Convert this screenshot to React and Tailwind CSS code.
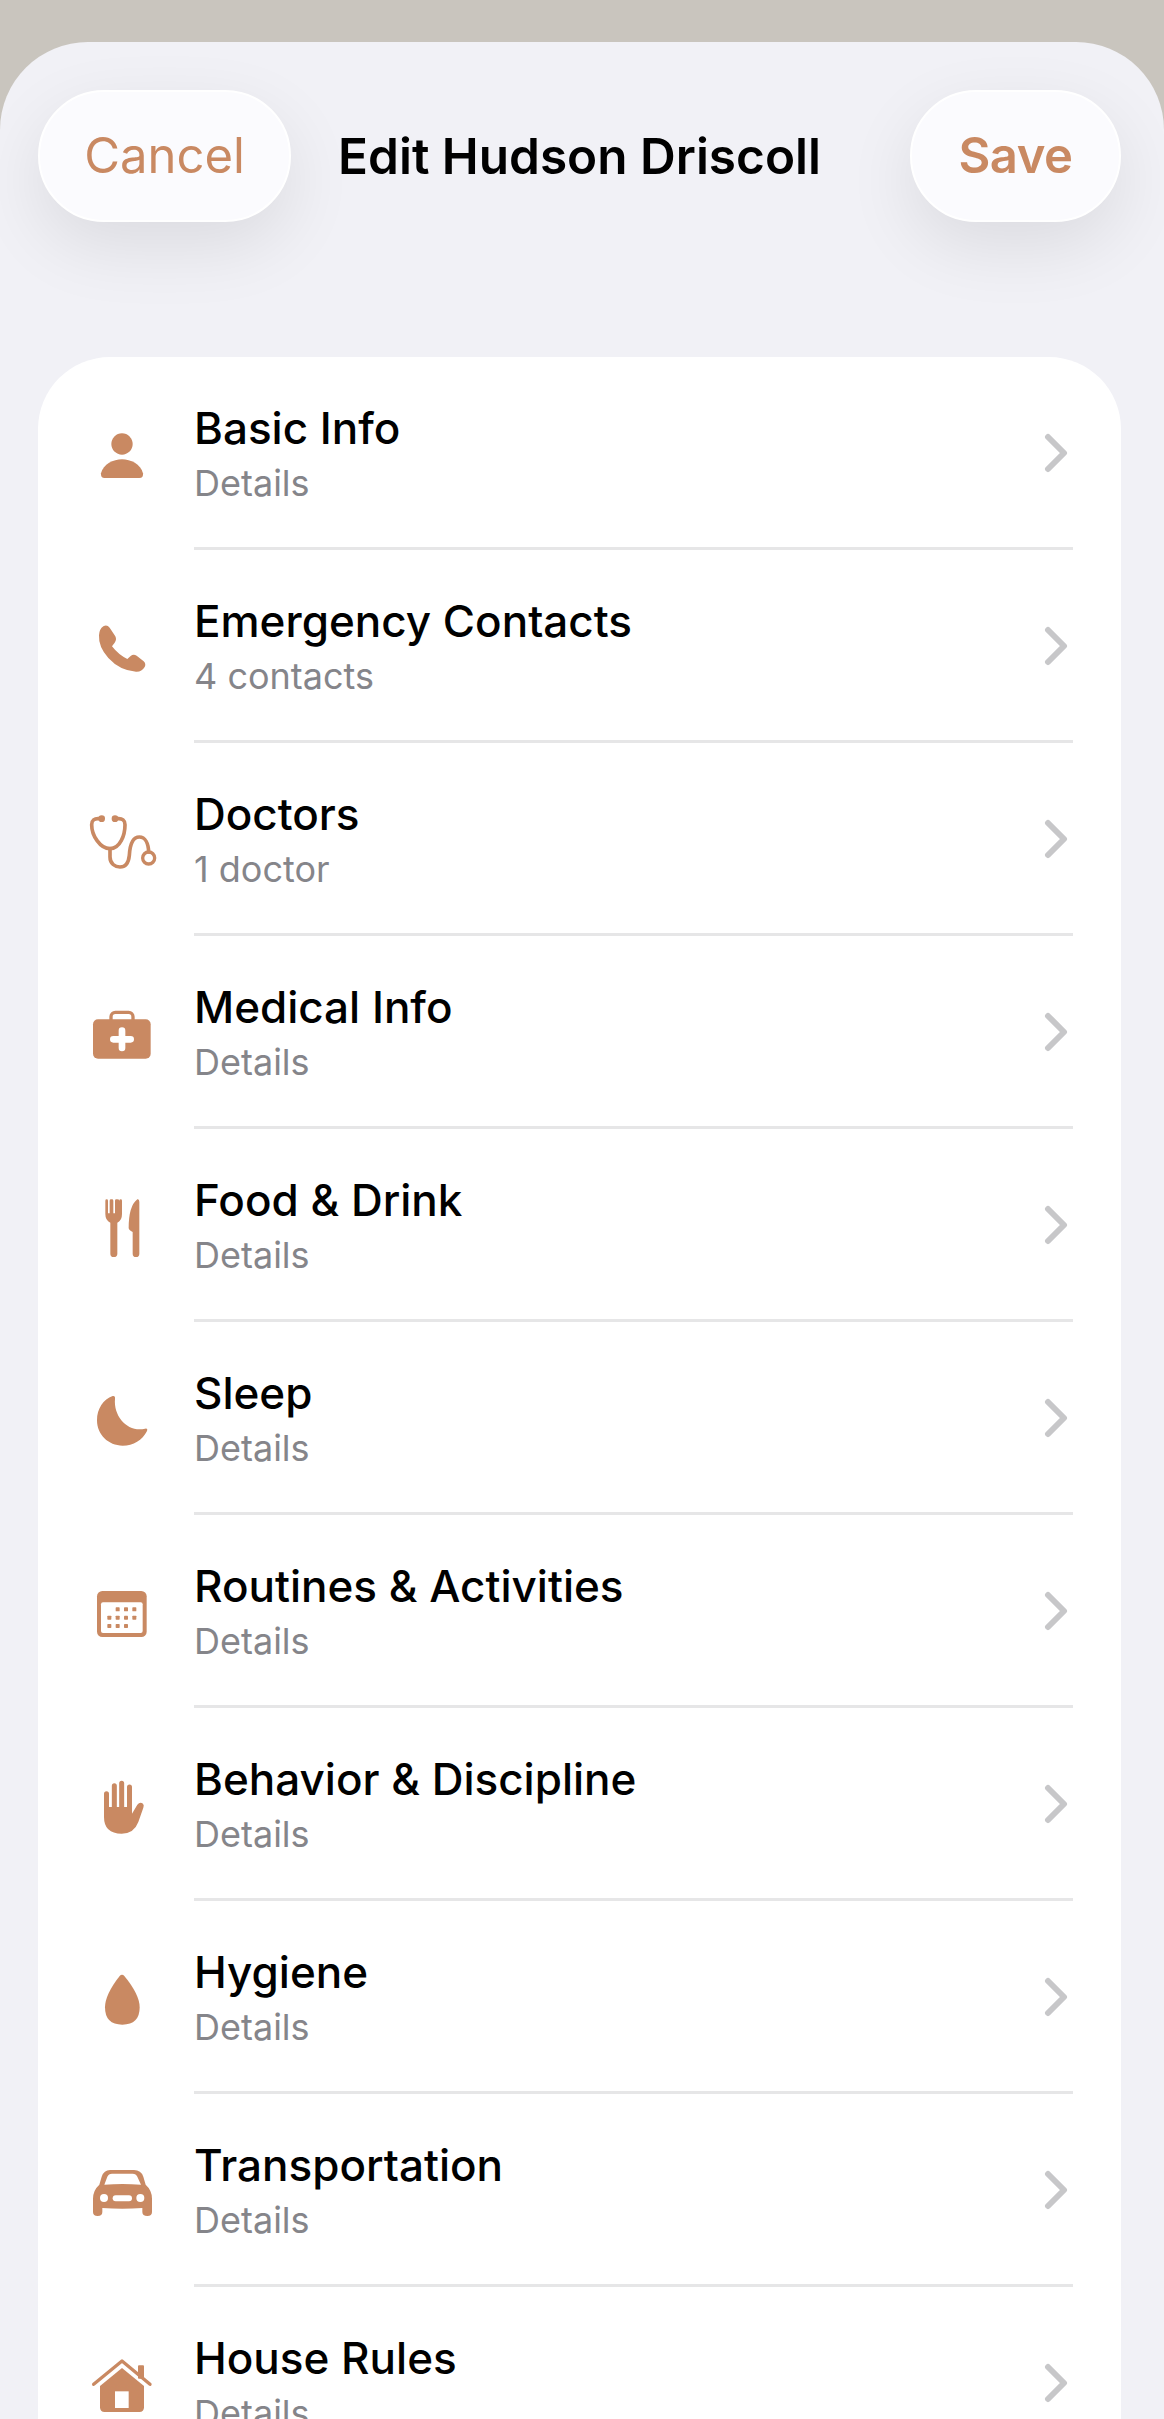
import React from 'react';

const ACCENT = '#c98962';

const icons = {
  person: (
    <svg viewBox="66 36 240 240" className="w-20 h-20" fill={ACCENT}>
      <circle cx="186" cy="126" r="32" />
      <path d="M123 214C130 186 160 172 186 172C212 172 242 186 249 214Q251 228 238 228H134Q121 228 123 214Z" />
    </svg>
  ),
  phone: (
    <svg viewBox="66 615 240 240" className="w-20 h-20" fill={ACCENT}>
      <path d="M130 673Q141 667 149 677L166 703Q171 713 164 722L156 733Q175 758 202 771L212 762Q220 755 230 761L251 778Q259 786 254 795Q245 810 228 809Q180 806 145 768Q115 735 117 700Q118 681 130 673Z" />
    </svg>
  ),
  stethoscope: (
    <svg viewBox="66 1194 240 240" className="w-20 h-20" fill="none" stroke={ACCENT} strokeWidth="11" strokeLinecap="round">
      <path d="M118 1250Q95 1248 95 1268C95 1300 120 1340 150 1340C180 1340 195 1300 195 1268Q195 1248 172 1250" />
      <path d="M150 1340V1365C150 1385 165 1395 180 1395C198 1395 206 1380 208 1360C210 1325 220 1305 238 1305C256 1305 265 1325 266 1350" />
      <circle cx="266" cy="1368" r="18" strokeWidth="10" />
      <circle cx="125" cy="1250" r="10" fill={ACCENT} stroke="none" />
      <circle cx="165" cy="1250" r="10" fill={ACCENT} stroke="none" />
    </svg>
  ),
  medical: (
    <svg viewBox="66 33 240 240" className="w-20 h-20">
      <rect x="153" y="91" width="66" height="40" rx="13" fill="none" stroke={ACCENT} strokeWidth="10" />
      <rect x="99" y="112" width="173" height="118" rx="15" fill={ACCENT} />
      <path d="M186 146V198M160 172H212" stroke="#fff" strokeWidth="20" strokeLinecap="round" fill="none" />
    </svg>
  ),
  food: (
    <svg viewBox="66 612 240 240" className="w-20 h-20" fill={ACCENT}>
      <path d="M136 656Q136 652 140 652Q144 652 144 656V694H149V656Q149 652 153 652H156Q160 652 160 656V694H165V656Q165 652 169 652H171Q178 652 178 656V694H178V656Q178 652 182 652Q186 652 186 656V696Q186 716 172 722V815Q172 825 161 825Q151 825 151 815V722Q136 716 136 696Z" />
      <path d="M238 660Q238 650 232 652Q206 672 206 738Q206 744 218 750V815Q218 825 228 825Q238 825 238 815Z" />
    </svg>
  ),
  moon: (
    <svg viewBox="66 1191 240 240" className="w-20 h-20" fill={ACCENT}>
      <path d="M158 1242Q166 1240 165 1250C160 1305 205 1352 255 1340Q264 1338 261 1347C247 1375 220 1391 188 1391C145 1391 111 1358 111 1315C111 1280 130 1252 158 1242Z" />
    </svg>
  ),
  calendar: (
    <svg viewBox="66 90 240 240" className="w-20 h-20" fill={ACCENT}>
      <rect x="111" y="147" width="149" height="138" rx="16" />
      <rect x="123" y="181" width="125" height="92" rx="6" fill="#fff" />
      {[[173, 202], [198, 202], [223, 202], [148, 227], [173, 227], [198, 227], [223, 227], [148, 252], [173, 252], [198, 252]].map(([x, y]) => (
        <rect key={`${x}-${y}`} x={x - 6} y={y - 6} width="12" height="12" rx="2" />
      ))}
    </svg>
  ),
  hand: (
    <svg viewBox="66 669 240 240" className="w-20 h-20" fill={ACCENT}>
      <path d="M139.500 755V815M163 731V810M185 724V810M208.500 735V815" stroke={ACCENT} strokeWidth="15" strokeLinecap="round" />
      <path d="M132 795H216V815L232 788Q240 778 249 785Q253 790 250 797L235 840Q222 875 185 875Q132 875 132 825Z" />
    </svg>
  ),
  drop: (
    <svg viewBox="66 1248 240 240" className="w-20 h-20" fill={ACCENT}>
      <path d="M179 1302Q186 1294 193 1302Q239 1358 239 1396Q239 1448 187 1448Q135 1448 135 1396Q135 1358 179 1302Z" />
    </svg>
  ),
  car: (
    <svg viewBox="66 327 240 240" className="w-20 h-20" fill={ACCENT}>
      <path d="M150 384H222Q243 384 250 404L257 428Q276 445 276 470V510Q276 522 262 522Q247 522 247 510V498Q187 502 127 498V510Q127 522 113 522Q99 522 99 510V470Q99 445 118 428L125 404Q132 384 150 384Z" />
      <path d="M133 428L142 404Q146 395 156 395H218Q228 395 232 404L243 428Q187 424 133 428Z" fill="#fff" />
      <circle cx="132" cy="468" r="12" fill="#fff" />
      <circle cx="241" cy="468" r="12" fill="#fff" />
      <rect x="158" y="460" width="58" height="18" rx="9" fill="#fff" />
    </svg>
  ),
  house: (
    <svg viewBox="66 906 240 240" className="w-20 h-20" fill={ACCENT}>
      <path d="M101 1027L186 957L270 1027" fill="none" stroke={ACCENT} strokeWidth="10" strokeLinecap="round" strokeLinejoin="round" />
      <rect x="234" y="970" width="18" height="40" rx="3" />
      <path d="M186 978L252 1032V1096Q252 1110 238 1110H134Q120 1110 120 1096V1032Z" />
      <rect x="165" y="1048" width="41" height="50" fill="#fff" />
    </svg>
  ),
};

const rows = [
  { icon: 'person', title: 'Basic Info', sub: 'Details' },
  { icon: 'phone', title: 'Emergency Contacts', sub: '4 contacts' },
  { icon: 'stethoscope', title: 'Doctors', sub: '1 doctor' },
  { icon: 'medical', title: 'Medical Info', sub: 'Details' },
  { icon: 'food', title: 'Food & Drink', sub: 'Details' },
  { icon: 'moon', title: 'Sleep', sub: 'Details' },
  { icon: 'calendar', title: 'Routines & Activities', sub: 'Details' },
  { icon: 'hand', title: 'Behavior & Discipline', sub: 'Details' },
  { icon: 'drop', title: 'Hygiene', sub: 'Details' },
  { icon: 'car', title: 'Transportation', sub: 'Details' },
  { icon: 'house', title: 'House Rules', sub: 'Details' },
];

const Row = ({ icon, title, sub }) => (
  <div className="flex items-stretch h-[193px]">
    <div className="w-[156px] shrink-0 flex items-center pl-[44px]">{icons[icon]}</div>
    <div className="flex-1 mr-[48px] flex items-center border-b-[3px] border-[#e6e6e7]">
      <div className="flex-1 pt-[3px]">
        <div className="text-[44px] leading-[52px] font-[450] text-black">{title}</div>
        <div className="mt-[6px] text-[36px] leading-[46px] text-[#85858a]">{sub}</div>
      </div>
      <svg viewBox="0 0 24 40" className="w-[24px] h-[40px] mr-[5px] mt-[2px]" fill="none" stroke="#c7c7c9" strokeWidth="6" strokeLinecap="round" strokeLinejoin="round">
        <path d="M4 4L20 20L4 36" />
      </svg>
    </div>
  </div>
);

const PillButton = ({ children, className }) => (
  <button className={`h-[132px] rounded-[66px] bg-[#fbfbfe] border-2 border-white text-[49px] text-[#c98962] shadow-[0_24px_70px_rgba(0,0,0,0.09)] ${className}`}>
    {children}
  </button>
);

export default function App() {
  return (
    <div className="h-[2419px] overflow-hidden bg-[#c9c5be] pt-[42px] font-['Inter','Noto_Sans',sans-serif]">
      <div className="h-full bg-[#f1f1f6] rounded-t-[88px] pl-[38px] pr-[43px] pt-[48px]">
        <div className="grid grid-cols-[1fr_auto_1fr] items-center">
          <PillButton className="justify-self-start w-[253px]">Cancel</PillButton>
          <h1 className="text-[49.500px] font-semibold text-black">Edit Hudson Driscoll</h1>
          <PillButton className="justify-self-end w-[211px] font-semibold tracking-[-0.5px]">Save</PillButton>
        </div>
        <div className="mt-[135px] bg-white rounded-t-[72px]">
          {rows.map((r) => (
            <Row key={r.title} {...r} />
          ))}
        </div>
      </div>
    </div>
  );
}
